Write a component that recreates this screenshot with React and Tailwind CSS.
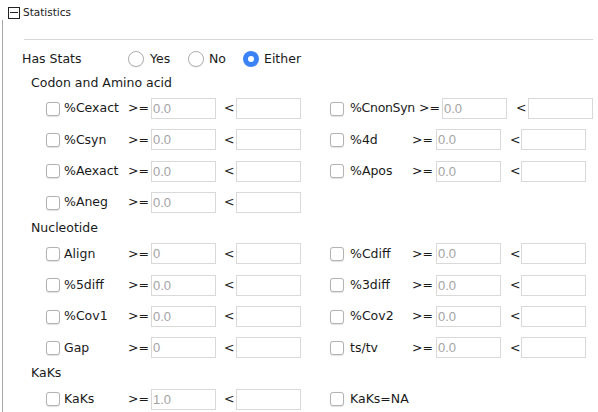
import React from "react";

const FONT = { fontFamily: '"DejaVu Sans", "Liberation Sans", sans-serif' };
const INFONT = { fontFamily: '"Liberation Sans", Arial, sans-serif' };

function Box({ value }) {
  return (
    <div
      className="h-[21px] w-[65px] shrink-0 border border-[#d9d9d9] bg-white pl-[1px] flex items-center text-[13px] text-[#a3a3a3]"
      style={INFONT}
    >
      {value}
    </div>
  );
}

function Check() {
  return <div className="h-[14px] w-[14px] shrink-0 rounded-[3px] border border-[#b3b3b3] bg-white shadow-[0_0.5px_1px_rgba(0,0,0,0.12)]" />;
}

function Left({ label, value }) {
  return (
    <div className="flex items-center w-[277px] shrink-0">
      <Check />
      <div className="w-[64px] shrink-0 ml-[4px]">{label}</div>
      <div className="w-[23px] shrink-0">&gt;=</div>
      <Box value={value} />
      <div className="w-[20px] shrink-0 pl-[8px]">&lt;</div>
      <Box value="" />
    </div>
  );
}

function Right({ label, value, wide }) {
  if (!value) {
    return (
      <div className="flex items-center">
        <Check />
        <div className="ml-[6px]">{label}</div>
      </div>
    );
  }
  return (
    <div className="flex items-center">
      <Check />
      <div className={(wide ? "w-[69px] tracking-[-0.3px]" : "w-[62px]") + " shrink-0 ml-[6px]"}>{label}</div>
      <div className={(wide ? "w-[23px]" : "w-[24px]") + " shrink-0"}>&gt;=</div>
      <Box value={value} />
      <div className={(wide ? "w-[21px] pl-[9px]" : "w-[20px] pl-[9px]") + " shrink-0"}>&lt;</div>
      <Box value="" />
    </div>
  );
}

function Row({ l, r }) {
  return (
    <div className="h-[31.33px] flex items-center pl-[24px]">
      <Left label={l[0]} value={l[1]} />
      <div className="w-[7px] shrink-0" />
      {r ? <Right label={r[0]} value={r[1]} wide={r[2]} /> : null}
    </div>
  );
}

function Header({ children }) {
  return <div className="h-[20px] flex items-center pl-[9px]">{children}</div>;
}

function Radio({ checked }) {
  if (checked) {
    return (
      <div className="h-[16px] w-[16px] shrink-0 rounded-full bg-[#3b82f6] flex items-center justify-center">
        <div className="h-[6px] w-[6px] rounded-full bg-white" />
      </div>
    );
  }
  return <div className="h-[16px] w-[16px] shrink-0 rounded-full border border-[#b0b0b0] bg-white shadow-[0_0.5px_1px_rgba(0,0,0,0.1)]" />;
}

export default function App() {
  return (
    <div className="w-[598px] h-[412px] overflow-hidden bg-white text-[12.5px] text-[#1a1a1a]" style={FONT}>
      <div className="h-[20px] flex items-center pl-[8px] pt-[5px]">
        <div className="h-[12px] w-[12px] border border-[#222] flex items-center justify-center">
          <div className="h-px w-[8px] bg-[#222]" />
        </div>
        <div className="ml-[3px] text-[10.5px]">Statistics</div>
      </div>
      <div className="ml-[2px] border-l border-[#a8a8a8] h-[392px] pl-[19px]">
        <div className="pt-[19px]">
          <div className="ml-[2px] h-px w-[569px] bg-[#d6d6d6]" />
        </div>
        <div className="mt-[8px] h-[22px] flex items-center">
          <div className="w-[106px] shrink-0">Has Stats</div>
          <div className="flex items-center w-[60px] shrink-0">
            <Radio />
            <span className="ml-[6px]">Yes</span>
          </div>
          <div className="flex items-center w-[55px] shrink-0">
            <Radio />
            <span className="ml-[5px]">No</span>
          </div>
          <div className="flex items-center">
            <Radio checked />
            <span className="ml-[5px]">Either</span>
          </div>
        </div>
        <div className="mt-[3px]">
          <Header>Codon and Amino acid</Header>
          <Row l={["%Cexact", "0.0"]} r={["%CnonSyn", "0.0", true]} />
          <Row l={["%Csyn", "0.0"]} r={["%4d", "0.0"]} />
          <Row l={["%Aexact", "0.0"]} r={["%Apos", "0.0"]} />
          <Row l={["%Aneg", "0.0"]} />
          <Header>Nucleotide</Header>
          <Row l={["Align", "0"]} r={["%Cdiff", "0.0"]} />
          <Row l={["%5diff", "0.0"]} r={["%3diff", "0.0"]} />
          <Row l={["%Cov1", "0.0"]} r={["%Cov2", "0.0"]} />
          <Row l={["Gap", "0"]} r={["ts/tv", "0.0"]} />
          <Header>KaKs</Header>
          <Row l={["KaKs", "1.0"]} r={["KaKs=NA", null]} />
        </div>
      </div>
    </div>
  );
}
